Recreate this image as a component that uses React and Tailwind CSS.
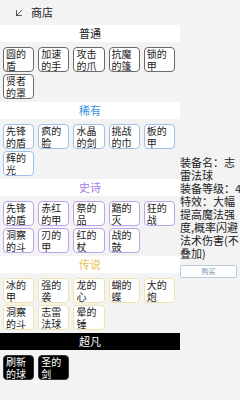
import { ArrowDownLeft } from 'lucide-react';

const SECTIONS = [
  {
    title: '普通',
    headerClass: 'bg-white text-[#222]',
    cardClass: 'bg-white border-[#6b6b6b] text-[#222]',
    items: ['圆的盾', '加速的手', '攻击的爪', '抗魔的篷', '锁的甲', '贤者的罩'],
  },
  {
    title: '稀有',
    headerClass: 'bg-white text-[#3d8fe0]',
    cardClass: 'bg-white border-[#9cc0ea] text-[#222]',
    items: ['先锋的盾', '疯的脸', '水晶的剑', '挑战的巾', '板的甲', '辉的光'],
  },
  {
    title: '史诗',
    headerClass: 'bg-white text-[#a57de6]',
    cardClass: 'bg-white border-[#bca3ea] text-[#222]',
    items: ['先锋的盾', '赤红的甲', '祭的品', '黯的灭', '狂的战', '洞察的斗', '刃的甲', '红的杖', '战的鼓'],
  },
  {
    title: '传说',
    headerClass: 'bg-white text-[#e9c24e]',
    cardClass: 'bg-white border-[#efe4ae] text-[#222]',
    items: ['冰的甲', '强的袭', '龙的心', '蝴的蝶', '大的炮', '洞察的斗', '志雷法球', '晕的锤'],
  },
  {
    title: '超凡',
    headerClass: 'bg-black text-white',
    cardClass: 'bg-black border-[#333] text-white',
    items: ['刷新的球', '圣的剑'],
  },
];

function ItemCard({ name, className }) {
  return (
    <div className={`h-[25px] rounded-[4px] border pl-[2px] text-[10px] leading-[11.5px] overflow-hidden ${className}`}>
      {name}
    </div>
  );
}

export default function App() {
  return (
    <div className="w-[240px] h-[400px] overflow-hidden bg-[#f3f3f3] font-['Noto_Sans_CJK_SC',sans-serif] flex flex-col">
      <div className="h-[25px] flex items-center gap-[6px] pl-[13px] text-[#222]">
        <ArrowDownLeft className="w-[12px] h-[12px]" strokeWidth={1.5} />
        <span className="text-[11px]">商店</span>
      </div>

      <div className="flex flex-1">
        <div className="w-[180px] flex flex-col gap-[3px]">
          {SECTIONS.map((section) => (
            <div key={section.title} className="flex flex-col gap-[5px]">
              <div className={`h-[17px] flex items-center justify-center text-[11px] ${section.headerClass}`}>
                {section.title}
              </div>
              <div className="grid grid-cols-5 gap-x-[4px] gap-y-[2px] pl-[3px] pr-[5px]">
                {section.items.map((item, i) => (
                  <ItemCard key={`${section.title}-${i}`} name={item} className={section.cardClass} />
                ))}
              </div>
            </div>
          ))}
        </div>

        <div className="w-[60px] flex flex-col justify-center pt-[8px] text-[11px] leading-[13px] text-[#222]">
          <p>装备名：志雷法球</p>
          <p className="whitespace-nowrap">装备等级：4</p>
          <p>特效：大幅提高魔法强度,概率闪避法术伤害(不叠加)</p>
          <button className="mt-[5px] mr-[3px] h-[13px] rounded-[2px] border border-[#b8cadc] bg-white text-[7px] leading-[11px] text-[#6f8fb0]">
            购买
          </button>
        </div>
      </div>
    </div>
  );
}
